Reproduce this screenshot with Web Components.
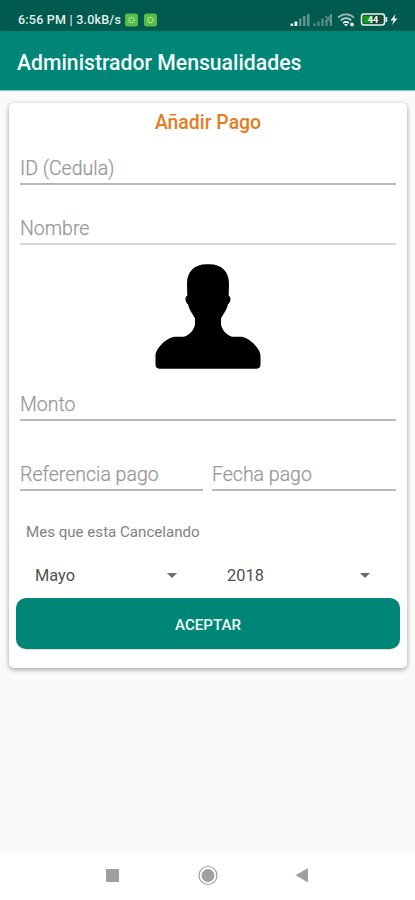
<!DOCTYPE html>
<html lang="es">
<head>
<meta charset="utf-8">
<title>Administrador Mensualidades</title>
<style>
html,body{margin:0;height:100%;overflow:hidden}
body{font-family:Roboto,sans-serif;background:#fafafa}
</style>
</head>
<body>
<payment-app></payment-app>
<script>
function define(name, html) {
  const t = document.createElement('template');
  t.innerHTML = html;
  customElements.define(name, class extends HTMLElement {
    constructor() {
      super();
      this.attachShadow({mode: 'open'}).append(t.content.cloneNode(true));
    }
  });
}

define('status-bar', `
<style>
:host{display:flex;height:31px;box-sizing:border-box;padding:8px 16px 0 18px;background:#005b4e;color:#e4efed;align-items:center;justify-content:space-between}
.l{display:flex;align-items:center;font-size:12.500px;font-weight:500;line-height:22px;white-space:pre}
.t{width:107px;letter-spacing:.22px}
.app{margin-right:6px}
svg{display:block}
</style>
<div class="l"><span class="t">6:56 PM | 3.0kB/s</span>
<svg class="app" width="13" height="14" viewBox="0 0 13 14"><rect y=".5" width="13" height="13" rx="2.5" fill="#59bd45"/><circle cx="6.5" cy="7" r="2.6" fill="none" stroke="#b7e9aa" stroke-width="1.5" stroke-dasharray="1.5 .8"/></svg>
<svg width="13" height="14" viewBox="0 0 13 14"><rect y=".5" width="13" height="13" rx="2.5" fill="#59bd45"/><circle cx="6.5" cy="7" r="2.6" fill="none" stroke="#b7e9aa" stroke-width="1.5" stroke-dasharray="1.5 .8"/></svg></div>
<svg width="109" height="16" viewBox="290 12 109 16">
<path d="M290.5 26v-2.5h2.6V26zM294.500 26v-4.500h2.800V26z" fill="#eef6f4"/>
<path d="M299 26v-7.500h2.500V26zM303 26v-10h2.500V26zM307 26v-12h2.500V26z" fill="#5e938b"/>
<path d="M313.500 26v-2.500h2V26zM317.500 26v-4.500h2V26zM321.500 26v-7.500h2V26zM325.500 26v-6h2v6zM330 26v-12h2v12z" fill="#5e938b"/>
<path d="M325.500 16l5 5.500m0-5.500l-5 5.500" stroke="#5e938b" stroke-width="1.300"/>
<g fill="none" stroke-width="1.700"><path d="M338 17.500q8-6.500 16 0" stroke="#91b5af"/><path d="M340.700 20.300q5.300-4.500 10.600 0" stroke="#b9d0cc"/><path d="M343 23q3-2.400 6 0" stroke="#fff"/></g>
<path d="M344 24l2 2.500 2-2.500z" fill="#fff"/><circle cx="352" cy="24.500" r="2" fill="#d4e3e0"/>
<rect x="361.500" y="14" width="23" height="11" rx="2.500" fill="#174b42" stroke="#edf4f2" stroke-width="1.500"/>
<path d="M385.500 17h1.700v5h-1.700z" fill="#edf4f2"/><path d="M363.300 15.800h9.500v7.400h-9.500z" fill="#1b9d13"/>
<text x="373" y="22.700" font-size="9" font-weight="700" text-anchor="middle" fill="#fff">44</text>
<path d="M395.500 14l-5 6.500h3l-1.500 4.500 5.500-6.500h-3.200z" fill="#f2f8f6"/>
</svg>`);

define('app-bar', `
<style>:host{display:flex;height:59px;padding:3px 0 0 17px;box-sizing:border-box;background:#008676;align-items:center;color:#f4fbfa;font-size:21.200px;font-weight:500;white-space:nowrap;box-shadow:0 1px 1px #8fc6c0}</style><slot></slot>`);

define('payment-card', `
<style>:host{display:flex;flex-direction:column;margin:13px 8px 0 9px;height:565px;background:#fff;border-radius:5px;box-shadow:0 2px 5px rgba(0,0,0,.28),0 0 4px rgba(0,0,0,.1)}</style><slot></slot>`);

define('card-title', `
<style>:host{display:block;height:42px;box-sizing:border-box;padding-top:8px;line-height:24px;text-align:center;color:#e97a20;font-size:19.400px;font-weight:500}</style><slot></slot>`);

define('text-field', `
<style>:host{display:flex;flex-direction:column;justify-content:flex-end;box-sizing:border-box;height:var(--h,60px);margin:0 11px;padding-bottom:2px;border-bottom:2px solid var(--line,#b7b7b7);color:#999;font-size:19.500px;line-height:24px;font-weight:300;white-space:nowrap}
span{display:block;-webkit-text-stroke:.25px #999}</style><span><slot></slot></span>`);

define('person-picture', `
<style>:host{display:flex;height:131px;justify-content:center;padding-left:3px}svg{display:block}</style>
<svg width="140" height="131" viewBox="0 0 140 131"><path d="M68 18.500C54 18 47 26 47 38l.3 12c-3 .8-2 7 .7 8.500 1 5 3.500 8 7 14v5c0 5-4 11-11 13.500H34c-8 1.500-18.500 12-18.500 19v8.500q0 4.500 4.500 4.500h96q4.500 0 4.500-4.500V110c0-7-10.500-17.500-18.500-19H92c-7-2.500-11-8.500-11-13.500v-5c3.500-6 6-9 7-14 2.700-1.500 3.500-7.700.7-8.500L89 38c0-12-7-20-21-19.500z" transform="translate(0 .8)"/></svg>`);

define('field-row', `
<style>:host{display:grid;grid-template-columns:183px 184px;column-gap:9px;height:70px;margin:0 11px}</style><slot></slot>`);

define('field-caption', `
<style>:host{display:block;height:64px;box-sizing:border-box;padding:31px 0 0 17px;line-height:20px;color:#828282;font-size:15.100px}</style><slot></slot>`);

define('select-row', `
<style>:host{display:grid;grid-template-columns:192px 193px;height:43px;margin-left:6px}</style><slot></slot>`);

define('drop-select', `
<style>:host{display:flex;justify-content:space-between;align-items:center;box-sizing:border-box;padding:0 30px 3px 20px;color:#505050;font-size:16.400px}i{border:5px solid transparent;border-top-color:#6b6b6b;border-bottom:0}</style><span><slot></slot></span><i></i>`);

define('accept-button', `
<style>:host{display:flex;height:51px;box-sizing:border-box;padding-top:2px;margin:0 7px 0 7px;border-radius:10px;background:#008676;color:#f0faf8;align-items:center;justify-content:center;font-size:15.100px;font-weight:500;box-shadow:0 1px 1px rgba(0,0,0,.14)}</style><slot></slot>`);

define('nav-bar', `
<style>:host{display:block;height:49px;margin-top:auto;background:#fff;box-shadow:0 -1px 1px #f5f5f5}svg{display:block}</style>
<svg width="415" height="49" viewBox="0 851 415 49"><g fill="#a0a0a0"><path d="M106 869h13v13h-13zM308 868v14.500l-12.500-7.200z"/><circle cx="208" cy="875.500" r="6.500"/></g><circle cx="208" cy="875.500" r="9" fill="none" stroke="#a0a0a0" stroke-width="1.200"/></svg>`);

define('payment-app', `
<style>
:host{display:flex;flex-direction:column;height:900px;width:415px;background:#fafafa}
</style>
<status-bar></status-bar>
<app-bar>Administrador Mensualidades</app-bar>
<payment-card>
<card-title>Añadir Pago</card-title>
<text-field style="--h:40px">ID (Cedula)</text-field>
<text-field style="--line:#d9d9d9">Nombre</text-field>
<person-picture></person-picture>
<text-field style="--h:45px">Monto</text-field>
<field-row><text-field style="--h:70px;margin:0">Referencia pago</text-field><text-field style="--h:70px;margin:0">Fecha pago</text-field></field-row>
<field-caption>Mes que esta Cancelando</field-caption>
<select-row><drop-select>Mayo</drop-select><drop-select>2018</drop-select></select-row>
<accept-button>ACEPTAR</accept-button>
</payment-card>
<nav-bar></nav-bar>`);
</script>
</body>
</html>
